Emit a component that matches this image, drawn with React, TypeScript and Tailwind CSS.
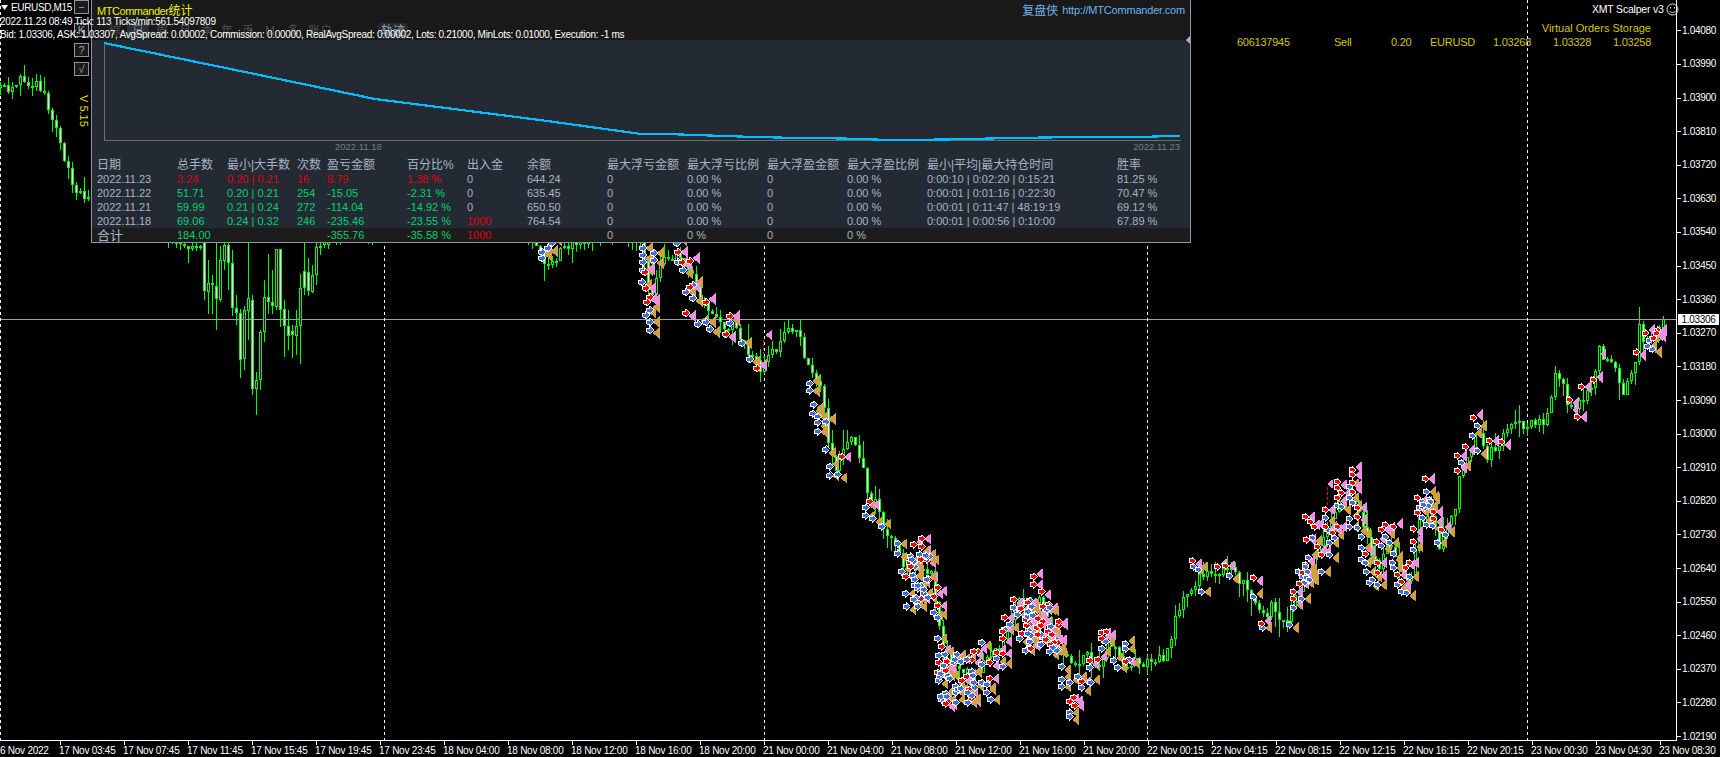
import { useMemo } from "react"

// price path, x -> y of the close, in chart pixels
const path: [number, number][] = [
  [0, 88], [10, 90], [20, 78], [30, 85], [40, 86], [48, 105], [56, 125], [64, 160], [72, 185], [84, 195], [200, 250],
  [330, 235], [500, 200], [538, 245], [545, 262], [600, 230], [640, 241], [650, 300], [660, 262], [680, 255], [695, 285], [705, 310], [720, 325],
  [735, 325], [745, 345], [760, 368], [766, 352], [775, 350], [785, 335], [795, 327], [800, 340], [805, 365], [815, 375], [820, 385],
  [828, 440], [835, 470], [845, 445], [855, 440], [863, 465], [868, 495], [878, 505], [885, 530], [900, 555], [905, 565], [932, 575], [940, 630],
  [945, 650], [960, 665], [975, 680], [985, 660], [1000, 650], [1010, 625], [1020, 600], [1030, 615], [1040, 600], [1055, 640], [1060, 650],
  [1075, 670], [1085, 650], [1095, 670], [1100, 665], [1110, 640], [1120, 660], [1125, 675], [1130, 665], [1140, 660], [1146, 665], [1155, 660],
  [1165, 655], [1170, 652], [1177, 615], [1192, 585], [1208, 570], [1217, 580], [1228, 565], [1240, 582], [1248, 587], [1260, 610], [1268, 620],
  [1272, 600], [1284, 625], [1288, 620], [1300, 590], [1310, 570], [1320, 550], [1330, 530], [1340, 500], [1350, 490], [1360, 510], [1370, 550],
  [1380, 570], [1390, 540], [1400, 570], [1410, 585], [1420, 520], [1430, 510], [1440, 550], [1444, 540], [1448, 525], [1456, 505], [1460, 478],
  [1466, 460], [1478, 432], [1488, 462], [1492, 452], [1500, 448], [1504, 432], [1512, 428], [1516, 420], [1520, 425], [1532, 425], [1544, 420],
  [1552, 398], [1557, 368], [1564, 388], [1568, 410], [1585, 398], [1597, 372], [1600, 346], [1604, 365], [1612, 360], [1620, 380], [1624, 390],
  [1628, 385], [1632, 372], [1636, 360], [1640, 326], [1644, 342], [1650, 340], [1660, 332],
]

// candles that show clearly under the panel: x, body top, body bottom, wick top, wick bottom, white
const fixedCandles: [number, number, number, number, number, number][] = [
  [204, 241, 291, 241, 300, 1], [208, 283, 292, 260, 314, 0], [212, 283, 285, 275, 314, 1], [216, 286, 299, 241, 330, 1],
  [220, 260, 300, 246, 302, 0], [224, 245, 261, 241, 270, 0], [228, 245, 263, 241, 290, 1], [232, 263, 308, 250, 316, 1],
  [236, 308, 313, 295, 325, 1], [240, 313, 360, 309, 378, 1], [244, 310, 359, 306, 370, 0], [248, 298, 311, 241, 340, 0],
  [252, 300, 389, 295, 395, 1], [256, 380, 389, 372, 415, 0], [260, 332, 380, 330, 390, 0], [264, 297, 332, 280, 342, 0],
  [268, 297, 302, 254, 314, 1], [272, 302, 306, 270, 314, 1], [276, 249, 307, 249, 310, 0], [280, 249, 310, 249, 327, 1],
  [284, 309, 326, 300, 357, 1], [288, 326, 336, 310, 350, 1], [292, 331, 335, 325, 358, 1], [296, 326, 336, 310, 355, 0],
  [300, 288, 326, 274, 364, 0], [304, 271, 288, 241, 295, 1], [308, 272, 291, 258, 296, 1], [312, 275, 292, 265, 293, 0],
  [316, 247, 275, 241, 285, 0], [320, 246, 248, 241, 255, 1], [324, 241, 245, 241, 248, 0],
  [1664, 319, 328, 316, 335, 0],
]

const blue: [number, number][] = [
  [542, 258], [542, 252], [548, 248], [552, 243], [643, 248], [643, 255], [643, 262], [643, 270], [642, 282], [646, 315], [650, 322], [650, 330], [650, 310],
  [654, 253], [654, 260], [677, 243], [678, 262], [683, 270], [693, 285], [686, 292], [693, 298], [698, 324], [706, 322], [710, 329], [730, 323],
  [742, 343], [750, 359], [810, 384], [810, 391], [814, 405], [813, 414], [818, 417], [818, 423], [826, 422], [818, 432], [826, 450], [830, 467],
  [830, 476], [838, 475], [866, 508], [866, 516], [873, 519], [882, 527], [898, 544], [898, 554], [902, 572], [906, 594], [907, 607], [918, 602],
  [918, 607], [934, 613], [938, 618], [938, 639], [982, 643], [982, 665], [982, 683], [987, 685], [987, 693], [991, 700], [997, 659], [1003, 667],
  [1005, 630], [1010, 625], [1014, 608], [1018, 615], [1062, 667], [1062, 680], [1062, 687], [1058, 650], [1070, 683], [1078, 677], [1082, 688],
  [1091, 683], [1070, 713], [1070, 717], [1090, 668], [1106, 642], [1102, 649], [1114, 661], [1118, 668], [1130, 660], [1126, 644], [1126, 649],
  [1194, 567], [1199, 570], [1202, 592], [1230, 576], [1254, 597], [1263, 628], [1290, 625], [1294, 608], [1302, 599], [1299, 572], [1303, 577],
  [1305, 583], [1313, 538], [1309, 558], [1322, 572], [1326, 518], [1328, 530], [1330, 543], [1330, 555], [1335, 538], [1338, 506], [1342, 507],
  [1350, 487], [1350, 498], [1353, 503], [1350, 519], [1350, 527], [1358, 528], [1362, 537], [1362, 548], [1362, 560], [1366, 563], [1367, 572],
  [1370, 583], [1373, 580], [1378, 585], [1382, 546], [1386, 537], [1390, 543], [1394, 554], [1393, 563], [1394, 568], [1398, 585], [1402, 592],
  [1410, 577], [1407, 593], [1414, 550], [1427, 492], [1425, 508], [1430, 500], [1427, 525], [1433, 526], [1446, 535], [1438, 543], [1462, 463],
  [1473, 436], [1478, 426], [1478, 451], [1650, 340], [1648, 346], [1653, 349],
]

const red: [number, number][] = [
  [645, 272], [646, 288], [650, 297], [647, 302], [678, 252], [682, 262], [690, 261], [690, 287], [686, 313], [706, 302], [730, 316], [726, 334], [757, 368],
  [842, 457], [870, 502], [914, 545], [922, 539], [922, 547], [910, 563], [906, 577], [938, 588], [934, 597], [938, 606], [942, 647], [978, 652],
  [990, 679], [990, 663], [997, 653], [1003, 654], [1003, 639], [1003, 632], [1005, 618], [1014, 600], [1034, 577], [1034, 585], [1042, 592], [1058, 643],
  [1082, 682], [1074, 698], [1070, 702], [1075, 706], [1090, 661], [1098, 660], [1102, 633], [1107, 632], [1102, 639], [1126, 662], [1193, 561],
  [1218, 567], [1226, 566], [1254, 578], [1262, 624], [1294, 592], [1294, 599], [1306, 565], [1306, 517], [1311, 522], [1315, 527], [1307, 540],
  [1318, 547], [1322, 555], [1326, 510], [1326, 527], [1333, 533], [1338, 527], [1338, 482], [1338, 488], [1342, 493], [1338, 498], [1353, 470],
  [1353, 475], [1353, 483], [1353, 492], [1358, 508], [1358, 517], [1366, 554], [1378, 563], [1378, 573], [1377, 542], [1382, 530], [1386, 525],
  [1394, 527], [1398, 575], [1402, 582], [1406, 568], [1410, 563], [1414, 529], [1414, 542], [1426, 479], [1418, 498], [1418, 513], [1434, 512],
  [1434, 519], [1442, 530], [1458, 456], [1466, 447], [1458, 471], [1490, 441], [1502, 442], [1474, 418], [1582, 387], [1570, 400], [1594, 380],
  [1578, 417], [1637, 352], [1646, 333], [1658, 330], [1657, 333], [1654, 338],
]

// dense heaps of arrows: x range, y range, how many, share of red
const heaps: [number, number, number, number, number, number][] = [
  [908, 930, 555, 600, 26, 0.25],
  [938, 975, 652, 705, 48, 0.38],
  [1020, 1060, 600, 652, 48, 0.45],
  [1300, 1310, 565, 585, 8, 0.1],
  [1420, 1432, 495, 520, 10, 0.3],
]

function rng(seed: number) {
  let s = seed
  return () => {
    s = (s * 1664525 + 1013904223) % 4294967296
    return s / 4294967296
  }
}

function yAt(x: number) {
  for (let i = 1; i < path.length; i++) {
    if (x <= path[i][0]) {
      const [x0, y0] = path[i - 1]
      const [x1, y1] = path[i]
      return y0 + ((y1 - y0) * (x - x0)) / (x1 - x0)
    }
  }
  return path[path.length - 1][1]
}

function Chart() {
  const candles = useMemo(() => {
    const r = rng(77)
    const out: { x: number; top: number; bot: number; wt: number; wb: number; white: boolean }[] = []
    let prev = yAt(0)
    for (let x = 0; x <= 1664; x += 4) {
      const fixed = fixedCandles.find(c => c[0] === x)
      if (fixed) {
        out.push({ x, top: fixed[1], bot: fixed[2], wt: fixed[3], wb: fixed[4], white: fixed[5] === 1 })
        prev = fixed[2]
        continue
      }
      const close = Math.round(yAt(x) + (r() - 0.5) * 11)
      const top = Math.min(prev, close)
      const bot = Math.max(Math.max(prev, close), top + 2)
      out.push({ x, top, bot, wt: Math.round(top - r() * r() * 20), wb: Math.round(bot + r() * r() * 20), white: close > prev })
      prev = close
    }
    return out
  }, [])

  const marks = useMemo(() => {
    const r = rng(13)
    const all: { x: number; y: number; isRed: boolean }[] = []
    blue.forEach(([x, y]) => all.push({ x, y, isRed: false }))
    red.forEach(([x, y]) => all.push({ x, y, isRed: true }))
    for (const [x0, x1, y0, y1, n, share] of heaps) {
      for (let i = 0; i < n; i++) {
        all.push({ x: Math.round(x0 + r() * (x1 - x0)), y: Math.round(y0 + r() * (y1 - y0)), isRed: r() < share })
      }
    }
    return all
  }, [])

  return (
    <svg className="block h-full w-full" viewBox="0 0 1677 740" width="1677" height="740" shapeRendering="crispEdges">
      <line x1="0" y1="319.5" x2="1677" y2="319.5" stroke="#a3a3a3" />
      {[0.5, 384.5, 764.5, 1148.5, 1528.5].map(x => (
        <line key={x} x1={x} y1="0" x2={x} y2="740" stroke="#fff" strokeDasharray="3 3" />
      ))}
      {candles.map(c => (
        <g key={c.x}>
          <rect x={c.x} y={c.wt} width="1" height={c.wb - c.wt} fill="#00ff00" />
          <rect x={c.x - 1} y={c.top} width="3" height={c.bot - c.top} fill="#00ff00" />
          {c.bot - c.top > 2 && <rect x={c.x} y={c.top + 1} width="1" height={c.bot - c.top - 2} fill={c.white ? "#fff" : "#000"} />}
        </g>
      ))}
      <line x1="763.5" y1="340" x2="763.5" y2="358" stroke="#ff0000" strokeDasharray="2 2" />
      <line x1="1328.5" y1="487" x2="1328.5" y2="507" stroke="#ff0000" strokeDasharray="3 2" />
      {marks.map((m, i) => {
        const dy = ((i % 3) - 1) * 3
        return (
          <polygon
            key={"t" + i}
            points={`${m.x + 3},${m.y + dy} ${m.x + 10},${m.y + dy - 6} ${m.x + 10},${m.y + dy + 6}`}
            fill={m.isRed ? "#ee8ee4" : "#cf9f40"}
          />
        )
      })}
      <polygon points="766,335 772,330 772,340" fill="#ee8ee4" />
      <polygon points="1328,484 1334,479 1334,489" fill="#ee8ee4" />
      <polygon points="1601,354 1607,349 1607,359" fill="#ee8ee4" />
      <polygon points="1573,410 1579,405 1579,415" fill="#ee8ee4" />
      {marks.map((m, i) => (
        <polygon
          key={"a" + i}
          points={`${m.x - 3},${m.y - 2} ${m.x},${m.y - 2} ${m.x},${m.y - 4} ${m.x + 4},${m.y} ${m.x},${m.y + 4} ${m.x},${m.y + 2} ${m.x - 3},${m.y + 2}`}
          fill={m.isRed ? "#ff0000" : "#4169e1"}
          stroke="#fff"
          strokeWidth="1"
        />
      ))}
    </svg>
  )
}

const prices = [
  "1.04080", "1.03990", "1.03900", "1.03810", "1.03720", "1.03630", "1.03540", "1.03450", "1.03360", "1.03270", "1.03180",
  "1.03090", "1.03000", "1.02910", "1.02820", "1.02730", "1.02640", "1.02550", "1.02460", "1.02370", "1.02280", "1.02190",
]

const times = [
  "17 Nov 03:45", "17 Nov 07:45", "17 Nov 11:45", "17 Nov 15:45", "17 Nov 19:45", "17 Nov 23:45",
  "18 Nov 04:00", "18 Nov 08:00", "18 Nov 12:00", "18 Nov 16:00", "18 Nov 20:00",
  "21 Nov 00:00", "21 Nov 04:00", "21 Nov 08:00", "21 Nov 12:00", "21 Nov 16:00", "21 Nov 20:00",
  "22 Nov 00:15", "22 Nov 04:15", "22 Nov 08:15", "22 Nov 12:15", "22 Nov 16:15", "22 Nov 20:15",
  "23 Nov 00:30", "23 Nov 04:30", "23 Nov 08:30",
]

const heads = ["日期", "总手数", "最小|大手数", "次数", "盈亏金额", "百分比%", "出入金", "余额", "最大浮亏金额", "最大浮亏比例", "最大浮盈金额", "最大浮盈比例", "最小|平均|最大持仓时间", "胜率"]

const rows = [
  { tone: "text-[#e0000f]", cells: ["2022.11.23", "3.24", "0.20 | 0.21", "16", "8.79", "1.38 %", "0", "644.24", "0", "0.00 %", "0", "0.00 %", "0:00:10 | 0:02:20 | 0:15:21", "81.25 %"] },
  { tone: "text-[#00d46a]", cells: ["2022.11.22", "51.71", "0.20 | 0.21", "254", "-15.05", "-2.31 %", "0", "635.45", "0", "0.00 %", "0", "0.00 %", "0:00:01 | 0:01:16 | 0:22:30", "70.47 %"] },
  { tone: "text-[#00d46a]", cells: ["2022.11.21", "59.99", "0.21 | 0.24", "272", "-114.04", "-14.92 %", "0", "650.50", "0", "0.00 %", "0", "0.00 %", "0:00:01 | 0:11:47 | 48:19:19", "69.12 %"] },
  { tone: "text-[#00d46a]", cells: ["2022.11.18", "69.06", "0.24 | 0.32", "246", "-235.46", "-23.55 %", "1000", "764.54", "0", "0.00 %", "0", "0.00 %", "0:00:01 | 0:00:56 | 0:10:00", "67.89 %"] },
]

const gridCols = "grid grid-cols-[80px_50px_70px_30px_80px_60px_60px_80px_80px_80px_80px_80px_190px_1fr] pl-[5px]"

function StatsPanel() {
  return (
    <div className="absolute left-[91px] top-0 flex h-[243px] w-[1100px] flex-col border-x border-b border-[#8b95a7] bg-[#232a33]">
      <div className="h-[40px] bg-[#191919]">
        <div className="flex h-[21px] items-center justify-between pl-[5px] pr-[5px]">
          <span className="text-[11px] leading-none tracking-[-0.45px] text-[#f2f200]">MTCommander<span className="text-[12px] tracking-normal">统计</span></span>
          <span className="flex items-center gap-1 text-[#6fb4ea]">
            <span className="text-[12px]">复盘侠</span>
            <span className="text-[11px] tracking-[-0.2px]">http://MTCommander.com</span>
          </span>
        </div>
        <div className="flex h-[18px] items-center pl-[17px] pt-[1px] text-[12px] leading-none text-[#4c4f55]">
          <span>综</span>
          <span className="ml-[6px] bg-[#2a2f36] px-[5px] py-[2px] text-[#6a7079]">日</span>
          <span className="ml-[7px]">周</span>
          <span className="ml-[11px]">月</span>
          <span className="ml-[10px]">季</span>
          <span className="ml-[8px]">年</span>
          <span className="ml-[9px]">币</span>
          <span className="ml-[11px]">M</span>
          <span className="ml-[12px]">多</span>
          <span className="ml-[9px]">账户</span>
          <span className="ml-[46px] rounded-sm bg-[#262b33] px-[3px] py-[2px] text-[#98a1ae]">轨迹</span>
        </div>
      </div>
      <div className="relative h-[118px]">
        <svg className="block w-full" viewBox="0 0 1098 118" width="1098" height="118" fill="none">
          <path d="M12.5 3V100.5H1088.5" stroke="#6e6e6e" shapeRendering="crispEdges" />
          <polyline
            shapeRendering="crispEdges"
            stroke="#00bfff"
            strokeWidth="2.2"
            points="12,3 158,33 283,59 448,80 547,93.7 574,94 618,95.5 662,97 708,98 752,98.5 798,100 854,99.5 920,98 988,97 1048,97 1088,95.7"
          />
        </svg>
        <span className="absolute left-[243px] top-[102px] text-[9.5px] leading-none text-[#767d88]">2022.11.18</span>
        <span className="absolute right-[10px] top-[102px] text-[9.5px] leading-none text-[#767d88]">2022.11.23</span>
        <span className="absolute right-0 top-[-4px] h-0 w-0 border-y-[4px] border-r-[4px] border-y-transparent border-r-[#aab2bd]" />
      </div>
      <div className={gridCols + " h-[14px] items-center text-[12px] leading-none text-[#a9b4c6]"}>
        {heads.map(h => <span key={h} className="whitespace-nowrap">{h}</span>)}
      </div>
      {rows.map(row => (
        <div key={row.cells[0]} className={gridCols + " h-[14px] items-center text-[11px] leading-none text-[#a9b4c6]"}>
          {row.cells.map((c, i) => {
            const toned = i >= 1 && i <= 5
            const isIn = i === 6 && c !== "0"
            return <span key={i} className={"whitespace-nowrap " + (toned ? row.tone : isIn ? "text-[#e0000f]" : "")}>{c}</span>
          })}
        </div>
      ))}
      <div className={gridCols + " min-h-0 flex-1 items-center bg-[#1c1c1c] text-[11px] leading-none text-[#a9b4c6]"}>
        <span className="text-[13px]">合计</span>
        <span className="text-[#00d46a]">184.00</span>
        <span />
        <span />
        <span className="text-[#00d46a]">-355.76</span>
        <span className="text-[#00d46a]">-35.58 %</span>
        <span className="text-[#e0000f]">1000</span>
        <span />
        <span>0</span>
        <span>0 %</span>
        <span>0</span>
        <span>0 %</span>
      </div>
    </div>
  )
}

function SideButton({ label, className }: { label: string; className: string }) {
  return (
    <div className={"flex h-[14px] w-[15px] items-center justify-center border border-[#8b95a7] bg-[#1a1a1a] text-[11px] leading-none text-[#9aa3b0] " + className}>
      {label}
    </div>
  )
}

export default function App() {
  return (
    <div className="relative flex h-[757px] w-[1720px] flex-col overflow-hidden bg-black font-['Liberation_Sans','Noto_Sans_CJK_SC',sans-serif]">
      <div className="flex h-[740px]">
        <div className="h-[740px] w-[1677px] shrink-0 border-r border-white">
          <Chart />
        </div>
        <div className="pt-[14px] text-[10px] leading-none tracking-[-0.3px] text-white">
          {prices.map(p => (
            <div key={p} className="flex h-[33.62px] items-center gap-[1px]">
              <span className="h-px w-[4px] bg-white" />
              <span>{p}</span>
            </div>
          ))}
        </div>
      </div>

      <div className="relative h-[17px] text-[10px] leading-none tracking-[-0.25px] text-white">
        <div className="h-px w-[1677px] bg-white" />
        <div className="flex">
          <div className="w-[60px] shrink-0 overflow-hidden pt-[5px]">
            <span className="whitespace-nowrap">6 Nov 2022</span>
          </div>
          {times.map(t => (
            <div key={t} className="w-[64px] shrink-0">
              <div className="h-[4px] w-px bg-white" />
              <span className="-ml-px block whitespace-nowrap pt-px">{t}</span>
            </div>
          ))}
        </div>
      </div>

      {/* price tag of the bid line */}
      <div className="absolute left-[1678px] top-[314px] flex h-[11px] w-[41px] items-center justify-center bg-white text-[10px] leading-none tracking-[-0.3px] text-black">
        1.03306
      </div>

      <StatsPanel />

      <div className="absolute left-[74px] top-0 flex flex-col">
        <SideButton label="−" className="" />
        <SideButton label="K" className="mt-[9px]" />
        <SideButton label="?" className="mt-[6px]" />
        <SideButton label="√" className="mt-[5px]" />
      </div>

      <div className="absolute left-[78px] top-[95px] text-[11px] leading-none text-[#e8e000] [writing-mode:vertical-rl]">V 5.15</div>

      {/* terminal info lines run over the panel */}
      <div className="absolute left-0 top-0 text-[10px] leading-none tracking-[-0.3px] text-white">
        <div className="flex h-[15px] items-center pl-[1px]">
          <svg width="7" height="5" viewBox="0 0 7 5" className="mr-[3px]"><polygon points="0,0 7,0 3.5,5" fill="#fff" /></svg>
          <span className="tracking-[-0.35px]">EURUSD,M15</span>
        </div>
        <div className="flex h-[13px] items-center whitespace-nowrap">2022.11.23 08:49 Tick: 113 Ticks/min:561.54097809</div>
        <div className="flex h-[13px] items-center whitespace-nowrap">Bid: 1.03306, ASK: 1.03307, AvgSpread: 0.00002, Commission: 0.00000, RealAvgSpread: 0.00002, Lots: 0.21000, MinLots: 0.01000, Execution: -1 ms</div>
      </div>

      <div className="absolute left-[1592px] top-[3px] flex items-center gap-[2px] text-[10.5px] leading-none tracking-[-0.2px] text-white">
        <span>XMT Scalper v3</span>
        <svg width="13" height="13" viewBox="0 0 13 13" fill="none" stroke="#e8e8e8">
          <circle cx="6.5" cy="6.5" r="5.5" />
          <path d="M3.5 8c1 2 5 2 6 0" />
          <rect x="4" y="4" width="1" height="1.5" fill="#e8e8e8" stroke="none" />
          <rect x="8" y="4" width="1" height="1.5" fill="#e8e8e8" stroke="none" />
        </svg>
      </div>

      <div className="absolute left-[1237px] top-[21px] w-[414px] text-[11px] leading-none text-[#d9c400]">
        <div className="flex h-[14px] items-center justify-end">Virtual Orders Storage</div>
        <div className="flex h-[14px] items-center whitespace-nowrap tracking-[-0.25px]">
          <span className="w-[97px]">606137945</span>
          <span className="w-[57px]">Sell</span>
          <span className="w-[39px]">0.20</span>
          <span className="w-[63px]">EURUSD</span>
          <span className="w-[60px]">1.03268</span>
          <span className="w-[60px]">1.03328</span>
          <span>1.03258</span>
        </div>
      </div>
    </div>
  )
}
